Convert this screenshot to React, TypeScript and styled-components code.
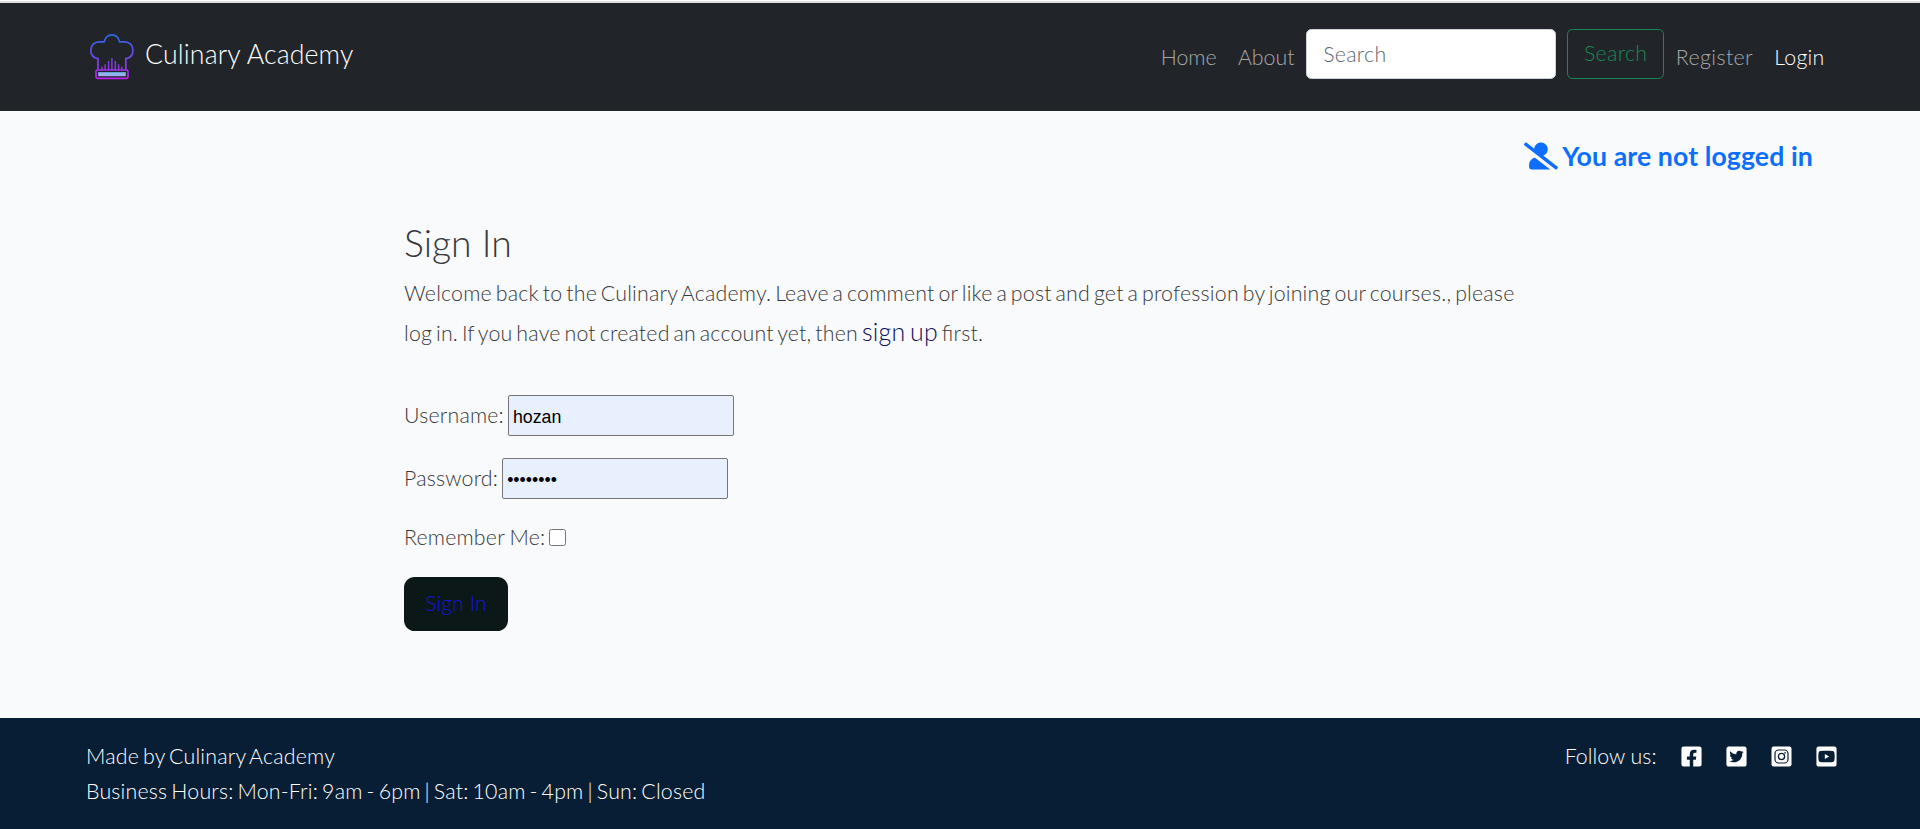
import React from "react";
import styled, { createGlobalStyle } from "styled-components";
import { FaUserSlash, FaFacebookSquare, FaTwitterSquare, FaYoutubeSquare } from "react-icons/fa";

const Global = createGlobalStyle`
  *, *::before, *::after { box-sizing: border-box; }
  body {
    margin: 0;
    background: #f9fafc;
    color: #38383b;
    font-family: Lato, "Open Sans", sans-serif;
    font-size: 21.333px;
    font-weight: 300;
    line-height: 1.5;
    font-feature-settings: "liga" 1;
  }
`;

const Page = styled.div`
  display: flex;
  flex-direction: column;
  height: 829px;
  overflow: hidden;
  border-top: 1px solid #fff;
`;

const Navbar = styled.header`
  display: flex;
  align-items: flex-start;
  justify-content: space-between;
  height: 110px;
  padding: 26px 85px 0 86px;
  border-top: 2px solid #dfdfdf;
  background: #212529;
`;

const Brand = styled.a`
  display: flex;
  align-items: center;
  gap: 9px;
  height: 50px;
  color: #fff;
  font-size: 26.667px;
  letter-spacing: 0.15px;
  white-space: nowrap;
`;

const LogoSvg = styled.svg`
  overflow: visible;
`;

const NavLinks = styled.nav`
  display: flex;
  align-items: flex-start;
`;

const NavLink = styled.a<{ $active?: boolean; $tracking?: number }>`
  padding: 12.5px 10.667px 0;
  color: ${(p) => (p.$active ? "#fff" : "rgba(255,255,255,.6)")};
  letter-spacing: ${(p) => p.$tracking ?? 0}px;
`;

const SearchForm = styled.form`
  display: flex;
  gap: 11px;
  margin: 0 1px;
`;

const SearchInput = styled.input`
  width: 250px;
  height: 50px;
  padding: 8px 16px;
  border: 1px solid #ced4da;
  border-radius: 5.333px;
  background: #fff;
  font: inherit;
  letter-spacing: 0.3px;
  &::placeholder { color: #5d666e; opacity: 1; }
`;

const SearchButton = styled.button`
  width: 97px;
  height: 50px;
  padding: 0;
  border: 1px solid #198754;
  border-radius: 5.333px;
  background: transparent;
  color: #198754;
  font: inherit;
  letter-spacing: 0.3px;
`;

const Status = styled.p`
  display: flex;
  align-items: center;
  justify-content: flex-end;
  gap: 4px;
  height: 40px;
  margin: 25px 107px 0 0;
  color: #0d6efd;
  font-size: 26.667px;
  font-weight: 700;
  letter-spacing: 0.1px;
`;

const Main = styled.main`
  width: 1120px;
  margin: 43px 0 0 404px;
`;

const Title = styled.h1`
  margin: 0 0 6px;
  font-size: 37.333px;
  font-weight: 300;
  line-height: 48px;
`;

const Intro = styled.p`
  margin: 0;
  line-height: 40px;
  letter-spacing: 0.2px;
  word-spacing: -2.1px;
`;

const SignUp = styled.a`
  color: #0c0c5a;
  font-size: 24.9px;
  line-height: 1;
`;

const Form = styled.form`
  display: flex;
  flex-direction: column;
  align-items: flex-start;
  margin-top: 42px;
`;

const Field = styled.label<{ $short?: boolean }>`
  display: flex;
  align-items: center;
  gap: 4px;
  height: ${(p) => (p.$short ? 34 : 41)}px;
  margin-bottom: 22px;
  letter-spacing: 0.2px;
  word-spacing: -1px;
`;

const TextInput = styled.input`
  width: 226px;
  height: 41px;
  padding: 5px 4px 1px;
  border: 1px solid #767676;
  border-radius: 2px;
  background: #e8f0fe;
  color: #000;
  font: 400 17.78px "Liberation Sans", Arial, sans-serif;
`;

const Checkbox = styled.input`
  width: 17px;
  height: 17px;
  margin: 0 0 2px;
`;

const Submit = styled.button`
  width: 104px;
  height: 54px;
  padding: 0;
  border: 0;
  border-radius: 10.667px;
  background: #0b1817;
  color: #1717d0;
  font: inherit;
`;

const Footer = styled.footer`
  display: flex;
  justify-content: space-between;
  height: 111px;
  margin-top: auto;
  padding: 21px 82.5px 0 86px;
  background: #081e35;
  color: #fff;
  line-height: 35px;
`;

const FooterInfo = styled.div`
  letter-spacing: 0.2px;
  word-spacing: -2px;
`;

const Social = styled.div`
  display: flex;
  align-items: center;
  gap: 22px;
  height: 35px;
`;

const SocialLabel = styled.span`
  margin-right: 1px;
`;

const bars = [
  [16, 37.7], [19.2, 35.3], [22.6, 32], [25.9, 29], [29.3, 32], [32.6, 35.3], [35.8, 37.7],
];

const Logo = () => (
  <LogoSvg width="50" height="50" viewBox="0 0 50 50" fill="none">
    <defs>
      <linearGradient id="hat" gradientUnits="userSpaceOnUse" x1="0" y1="5" x2="0" y2="50">
        <stop offset="0" stopColor="#2a68e4" />
        <stop offset="0.5" stopColor="#6a48ee" />
        <stop offset="1" stopColor="#c321ee" />
      </linearGradient>
      <linearGradient id="band" x1="0" y1="0" x2="0" y2="1">
        <stop offset="0" stopColor="#76c4f2" />
        <stop offset="1" stopColor="#a9a5f3" />
      </linearGradient>
    </defs>
    <g stroke="url(#hat)" strokeWidth="1.7">
      <path d="M12 40.5V29.6C7.5 28.9 4.8 25.5 4.8 21.2C4.8 16.3 8.4 12.8 13 12.8H18.2C19.2 8.6 22 5.8 25.9 5.8C29.8 5.8 32.6 8.6 33.6 12.8H38.8C43.4 12.8 47 16.3 47 21.2C47 25.5 44.3 28.9 39.8 29.6V40.5" />
      <rect x="10" y="41" width="32" height="8.4" rx="1.6" />
    </g>
    <g fill="url(#hat)">
      {bars.map(([x, y]) => (
        <rect key={x} x={x - 0.7} y={y} width="1.4" height={41 - y} />
      ))}
    </g>
    <rect x="12.2" y="43.2" width="27.6" height="4" fill="url(#band)" />
  </LogoSvg>
);

const InstagramSquare = () => (
  <svg width="23" height="23" viewBox="-1.5 -1.5 23 23" fill="none" stroke="#081e35">
    <rect width="20" height="20" rx="2.2" fill="#fff" stroke="none" />
    <rect x="3.5" y="3.5" width="13" height="13" rx="3.6" strokeWidth="1.2" />
    <circle cx="10" cy="10" r="3.1" strokeWidth="1.3" />
    <circle cx="13.6" cy="6.4" r="0.8" fill="#081e35" stroke="none" />
  </svg>
);

export default function App() {
  return (
    <>
      <Global />
      <Page>
        <Navbar>
          <Brand><Logo />Culinary Academy</Brand>
          <NavLinks>
            <NavLink>Home</NavLink>
            <NavLink>About</NavLink>
            <SearchForm>
              <SearchInput placeholder="Search" />
              <SearchButton type="button">Search</SearchButton>
            </SearchForm>
            <NavLink $tracking={0.4}>Register</NavLink>
            <NavLink $active $tracking={0.2}>Login</NavLink>
          </NavLinks>
        </Navbar>
        <Status><FaUserSlash size={34} />You are not logged in</Status>
        <Main>
          <Title>Sign In</Title>
          <Intro>
            Welcome back to the Culinary Academy. Leave a comment or like a post and get a profession by joining our courses., please log in. If you have not created an account yet, then <SignUp>sign up</SignUp> first.
          </Intro>
          <Form>
            <Field>Username: <TextInput defaultValue="hozan" /></Field>
            <Field>Password: <TextInput type="password" defaultValue="password" /></Field>
            <Field $short>Remember Me: <Checkbox type="checkbox" /></Field>
            <Submit type="button">Sign In</Submit>
          </Form>
        </Main>
        <Footer>
          <FooterInfo>
            <div>Made by Culinary Academy</div>
            <div>Business Hours: Mon-Fri: 9am - 6pm | Sat: 10am - 4pm | Sun: Closed</div>
          </FooterInfo>
          <Social>
            <SocialLabel>Follow us:</SocialLabel>
            <FaFacebookSquare size={23} />
            <FaTwitterSquare size={23} />
            <InstagramSquare />
            <FaYoutubeSquare size={23} />
          </Social>
        </Footer>
      </Page>
    </>
  );
}
